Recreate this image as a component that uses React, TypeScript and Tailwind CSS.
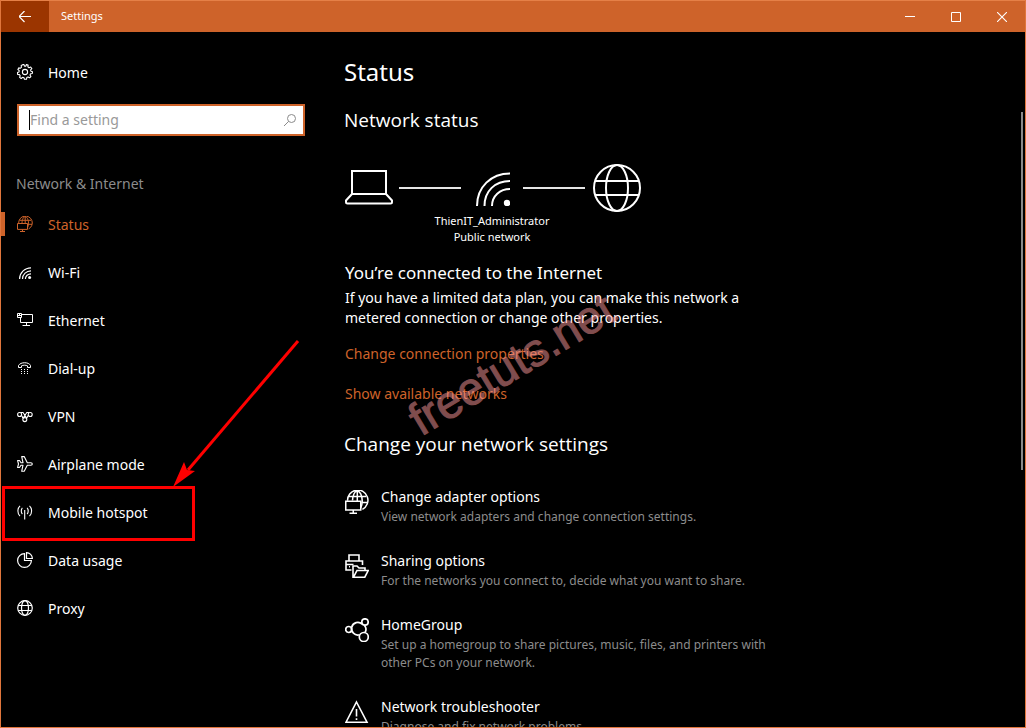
import type { ReactNode, SVGProps } from "react";

type IconProps = SVGProps<SVGSVGElement>;

function Icon({ size, children, ...rest }: IconProps & { size: number; children: ReactNode }) {
  return (
    <svg
      width={size}
      height={size}
      viewBox={`0 0 ${size} ${size}`}
      fill="none"
      stroke="currentColor"
      strokeWidth="1"
      aria-hidden="true"
      className="shrink-0"
      {...rest}
    >
      {children}
    </svg>
  );
}

const GearIcon = () => (
  <Icon size={16} strokeWidth="1.1" strokeLinejoin="round">
    <path d="M6.2 .6H7L7.500 2.200H8.700L9.300 .6 11.100 1.100 10.900 2.900 12 3.700 13.700 3 14.900 4.700 13.600 5.900 13.900 7.200 15.500 7.700 15.300 9.500 13.600 9.700 13 10.900 13.900 12.500 12.600 13.800 11 12.900 9.800 13.500 9.500 15.300H7.500L6.900 13.700 5.600 13.300 4.200 14.500 2.600 13.400 3.200 11.700 2.400 10.600 .6 10.500 .4 8.600 2 7.900 2.200 6.700 .9 5.500 1.700 3.900 3.500 4.200 4.400 3.300 4.200 1.500z" />
    <circle cx="8" cy="8" r="2.600" />
  </Icon>
);

const StatusIcon = ({ size = 16 }: { size?: number }) => (
  <svg
    width={size}
    height={size}
    viewBox="0 0 16 16"
    fill="none"
    stroke="currentColor"
    aria-hidden="true"
    className="shrink-0"
  >
    <path d="M1.7 7.2A6.8 6.8 0 1 1 11.6 12.9M2.6 4.3H14M10.8 8.3H15M5 7C5.1 3.6 6.5.6 8.2.6s3.3 3 3.3 6.7c0 1.800-.4 3.500-1.100 4.700M8.200.6V7.500" />
    <path d="M.5 7.500H10.500V13.400H.5zM5.500 13.400V15.400M3 15.500H8" />
  </svg>
);

const WifiIcon = () => (
  <Icon size={16} strokeWidth="1.2">
    <path d="M2.600 15C2.600 9 7.500 3.800 14 3.800M5.500 15C5.500 10.300 9.500 6.800 14 6.800M8.400 15C8.400 12 11 9.800 14 9.800" />
    <circle cx="12.600" cy="13.400" r="1.500" fill="currentColor" stroke="none" />
  </Icon>
);

const EthernetIcon = () => (
  <Icon size={16}>
    <path d="M5 2.500H15.500V10.500H3.500V6M9.500 10.500V13.500M5.500 13.500H13M.5 1.500H4.500V5.500H.5zM2.500 1.500V3.500M.5 3.500H4.500" />
  </Icon>
);

const DialIcon = () => (
  <Icon size={16}>
    <path d="M1.500 7.500V5.500C3.500 1.800 12 1.800 13.500 5.500V7.500H10.500V5.800C9 5 6 5 4.500 5.800V7.500z" />
    <path d="M4 9.500H5M7 9.500H8M10 9.500H11M4 11.500H5M7 11.500H8M10 11.500H11M4 13.500H5M7 13.500H8M10 13.500H11" />
  </Icon>
);

const VpnIcon = () => (
  <Icon size={16} strokeWidth="1.100">
    <circle cx="2.600" cy="6.500" r="2" />
    <circle cx="13.200" cy="6.500" r="2" />
    <circle cx="7.800" cy="11.600" r="2" />
    <path d="M3.500 4.500H6L9.800 10.200M4.600 7.500 6.200 10.200M12.300 4.500H9.800L6 10.200M11.200 7.500 9.600 10.200" />
  </Icon>
);

const PlaneIcon = () => (
  <Icon size={16} strokeWidth="1.100" strokeLinejoin="round">
    <path d="M.6 4.500H2.500L4 6.700H6L4.700 .6H7.200L10.300 6.700H13.800C15.800 7 15.800 8.900 13.800 9.200H10.300L7.200 15.300H4.700L6 9.200H4L2.500 11.500H.6L1.500 8z" />
  </Icon>
);

const HotspotIcon = () => (
  <Icon size={16} strokeWidth="1.100">
    <path d="M7.700 6V15.500M3 1.800C.2 4.500.2 9.500 3 12M5.400 3.800C3.900 5.400 3.900 8.400 5.400 10M12.500 1.800C15.300 4.500 15.300 9.500 12.500 12M10.100 3.800C11.600 5.400 11.600 8.400 10.100 10" />
  </Icon>
);

const DataIcon = () => (
  <Icon size={16} strokeWidth="1.200">
    <path d="M7.500 1.600A6.900 6.900 0 1 0 14.400 8.500H7.500z" />
    <path d="M9.500 .6V6.500H15.400A6 6 0 0 0 9.500 .6z" />
  </Icon>
);

const ProxyIcon = () => (
  <Icon size={16} strokeWidth="1.200">
    <circle cx="8" cy="8" r="7.300" />
    <ellipse cx="8" cy="8" rx="3.500" ry="7.300" />
    <path d="M1.200 5.500H14.800M1.200 10.500H14.800" />
  </Icon>
);

const SharingIcon = () => (
  <Icon size={24} strokeWidth="1.600">
    <path d="M4 6.500V1H14V6.500M6.500 16H1V7H17.500V11M1 10.500H8.500M4 12.800H5" />
    <path d="M8 16V12H12L14 14H20V16.500M8 14V23.200H19.800L23.200 16.500H12L8.500 23.200" />
  </Icon>
);

const HomeGroupIcon = () => (
  <Icon size={24} strokeWidth="1.700">
    <circle cx="3.700" cy="11.500" r="3" />
    <path d="M17.200 6.200A6.300 6.300 0 1 0 14.500 16.800M20 14.500A6 6 0 0 0 19.500 7.500" />
    <circle cx="20" cy="4" r="3.200" />
    <circle cx="18.800" cy="19" r="4.500" />
  </Icon>
);

const WarningIcon = () => (
  <Icon size={24} strokeWidth="1.600">
    <path d="M11.500 2 22 22.200H1zM11.500 9V16.500M11.500 18.200V20" />
  </Icon>
);

const navItems = [
  { label: "Status", icon: <StatusIcon />, active: true },
  { label: "Wi-Fi", icon: <WifiIcon /> },
  { label: "Ethernet", icon: <EthernetIcon /> },
  { label: "Dial-up", icon: <DialIcon /> },
  { label: "VPN", icon: <VpnIcon /> },
  { label: "Airplane mode", icon: <PlaneIcon /> },
  { label: "Mobile hotspot", icon: <HotspotIcon />, marked: true },
  { label: "Data usage", icon: <DataIcon /> },
  { label: "Proxy", icon: <ProxyIcon /> },
];

const options = [
  {
    title: "Change adapter options",
    text: "View network adapters and change connection settings.",
    icon: <StatusIcon size={24} />,
  },
  {
    title: "Sharing options",
    text: "For the networks you connect to, decide what you want to share.",
    icon: <SharingIcon />,
  },
  {
    title: "HomeGroup",
    text: "Set up a homegroup to share pictures, music, files, and printers with other PCs on your network.",
    icon: <HomeGroupIcon />,
  },
  {
    title: "Network troubleshooter",
    text: "Diagnose and fix network problems.",
    icon: <WarningIcon />,
  },
];

function TitleBar() {
  return (
    <header className="flex h-8 shrink-0 items-stretch border-t border-[#e58047] bg-[#ce632a]">
      <button aria-label="Back" className="flex w-12 items-center justify-center bg-[#9b3500]">
        <Icon size={12}>
          <path d="M0 5.500H12M5.500 0 0 5.500 5.500 11" strokeWidth="1.200" />
        </Icon>
      </button>
      <h1 className="flex flex-1 items-center pl-3 text-[11px]">Settings</h1>
      <button aria-label="Minimize" className="flex w-[46px] items-center justify-center">
        <Icon size={10}>
          <path d="M0 4.500H10" />
        </Icon>
      </button>
      <button aria-label="Maximize" className="flex w-[46px] items-center justify-center">
        <Icon size={10}>
          <path d="M.5 .5H9.500V9.500H.5z" />
        </Icon>
      </button>
      <button aria-label="Close" className="flex w-[46px] items-center justify-center">
        <Icon size={10}>
          <path d="M0 0 10 10M10 0 0 10" strokeWidth="1.100" />
        </Icon>
      </button>
    </header>
  );
}

function Sidebar() {
  return (
    <aside className="w-[327px] shrink-0 pt-4">
      <a href="#home" className="flex h-12 items-center gap-[15px] pl-4 text-sm">
        <GearIcon />
        <span className="pt-0.5">Home</span>
      </a>
      <div className="mt-2 mr-[23px] ml-4 flex h-8 items-center border-2 border-[#ce632a] bg-white pr-1.5">
        <span className="ml-2.5 h-5 w-px bg-black" />
        <input
          type="text"
          aria-label="Find a setting"
          placeholder="Find a setting"
          className="min-w-0 flex-1 bg-transparent text-sm text-black outline-none placeholder:text-[#999999]"
        />
        <span className="text-[#8a8a8a]">
          <Icon size={14}>
            <circle cx="8.500" cy="5.500" r="4" />
            <path d="M5.600 8.400 1 13" />
          </Icon>
        </span>
      </div>
      <h2 className="mt-8 flex h-8 items-center pl-[15px] text-sm text-[#8c8c8c]">Network &amp; Internet</h2>
      <nav>
        {navItems.map((item) => (
          <a
            key={item.label}
            href="#section"
            className={
              item.active
                ? "relative flex h-12 items-center gap-[15px] pl-4 text-sm text-[#ce632a]"
                : "relative flex h-12 items-center gap-[15px] pl-4 text-sm"
            }
          >
            {item.active && <span className="absolute top-3 left-0 h-6 w-1 bg-[#ce632a]" />}
            {item.icon}
            <span className="pt-0.5">{item.label}</span>
            {item.marked && (
              <>
                <span className="absolute -top-0.5 left-px h-[55px] w-[193px] border-[3px] border-[#ff0000]" />
                <svg
                  width="130"
                  height="150"
                  viewBox="0 0 130 150"
                  className="pointer-events-none absolute bottom-12 left-[171px]"
                  aria-hidden="true"
                >
                  <path d="M126 3 16 132" stroke="#ff0000" strokeWidth="3" />
                  <path d="M1 149 12 124 15 132 23 133z" fill="#ff0000" />
                </svg>
              </>
            )}
          </a>
        ))}
      </nav>
    </aside>
  );
}

function ConnectionDiagram() {
  return (
    <div className="mt-8 w-[296px]">
      <div className="flex h-12 items-center">
        <Icon size={48} strokeWidth="2">
          <path d="M7 7H41V30H7zM7 30 1 36.500V38Q1 39.500 2.500 39.500H45.500Q47 39.500 47 38V36.500L41 30" />
        </Icon>
        <span className="ml-1.5 h-0.5 w-[62px] bg-[#e5e5e5]" />
        <span className="flex flex-1 justify-center">
          <Icon size={36} strokeWidth="2">
            <path d="M3 36C3 17 17 3.500 36 3.500M10.500 36C10.500 21 21 11 36 11M18 36C18 26 26 19 36 19" />
            <circle cx="33" cy="33" r="3.200" fill="currentColor" stroke="none" />
          </Icon>
        </span>
        <span className="mr-2 h-0.5 w-[62px] bg-[#e5e5e5]" />
        <Icon size={48} strokeWidth="2">
          <circle cx="24" cy="24" r="23" />
          <ellipse cx="24" cy="24" rx="11" ry="23" />
          <path d="M2 17H46M2 31H46" />
        </Icon>
      </div>
      <p className="pt-px pr-0.5 text-center text-[11px] leading-4">
        ThienIT_Administrator
        <br />
        Public network
      </p>
    </div>
  );
}

function StatusPage() {
  return (
    <main className="min-w-0 flex-1 overflow-hidden pt-6 pl-4">
      <h2 className="text-2xl leading-8">Status</h2>
      <h3 className="mt-5 font-['Open_Sans','Noto_Sans',sans-serif] text-[19px] leading-6">Network status</h3>
      <div className="max-w-[440px] pl-px">
        <ConnectionDiagram />
        <h4 className="mt-4 text-[17px] leading-6">You’re connected to the Internet</h4>
        <p className="mt-[3px] max-w-[410px] text-sm leading-5">
          If you have a limited data plan, you can make this network a metered connection or change other properties.
        </p>
        <a href="#properties" className="mt-4 block text-sm leading-5 text-[#ce632a]">
          Change connection properties
        </a>
        <a href="#networks" className="mt-5 block text-sm leading-5 text-[#ce632a]">
          Show available networks
        </a>
      </div>
      <h3 className="mt-7 font-['Open_Sans','Noto_Sans',sans-serif] text-[19px] leading-6">
        Change your network settings
      </h3>
      <ul className="mt-[31px] max-w-[440px] pl-px">
        {options.map((option) => (
          <li key={option.title} className="mb-6">
            <a href="#option" className="flex gap-3">
              <span className="pt-[3px]">{option.icon}</span>
              <span className="block pb-px">
                <span className="block text-sm leading-5">{option.title}</span>
                <span className="mt-px block text-xs leading-[18px] text-[#8c8c8c]">{option.text}</span>
              </span>
            </a>
          </li>
        ))}
      </ul>
    </main>
  );
}

export default function App() {
  return (
    <div className="relative flex h-screen flex-col overflow-hidden border-x border-b border-[#e0763c] bg-black font-['Noto_Sans','Open_Sans',sans-serif] text-white">
      <TitleBar />
      <div className="flex min-h-0 flex-1">
        <Sidebar />
        <StatusPage />
      </div>
      <span className="absolute top-28 right-0.5 h-[358px] w-0.5 bg-[#8a8a8a]" />
      <span className="pointer-events-none absolute top-[398px] left-[423px] origin-bottom-left -rotate-31 font-['Liberation_Sans',sans-serif] text-[46px] leading-[44px] text-[#ff9a9c] opacity-50 [-webkit-text-stroke:1px_#ff9a9c]">
        freetuts.net
      </span>
    </div>
  );
}
